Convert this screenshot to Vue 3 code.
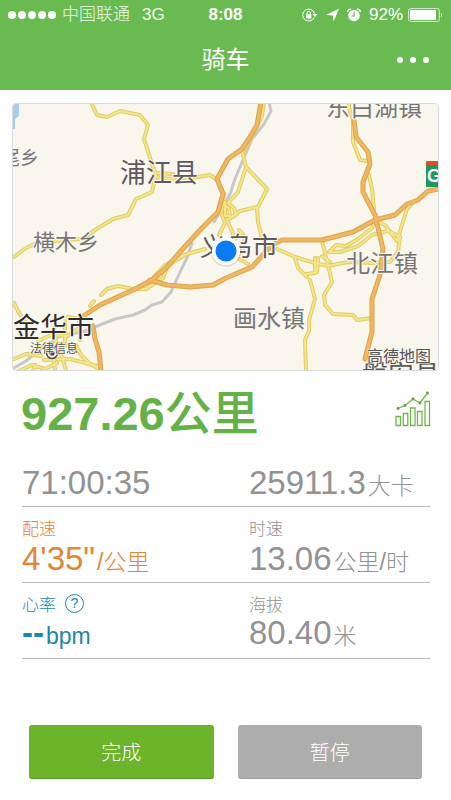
<script setup>
const railways = [
  'M269 102 L271 111 L264 124 L252 139 L243 160 L235 179 L230 194 L224 206 L214 222',
  'M192 243 L187 258 L180 272 L171 292 L162 302 L152 305 L145 310 L133 315 L115 319 L100 325 L83 332 L60 336 L42 348 L33 355 L26 361 L14 368',
]

const minorRoads = [
  'M91 102 L97 115 L107 117 L120 111 L140 115 L148 125 L144 139 L152 164 L156 174 L152 192 L136 199 L128 215 L113 219 L95 230 L82 239 L63 240 L34 244 L26 248 L14 257',
  'M156 173 L173 174 L177 178 L198 177 L210 175 L216 179',
  'M156 177 L171 179 L177 178',
  'M101 295 L107 289 L118 286 L133 289 L146 289 L163 278 L167 268 L173 262 L187 254 L205 249',
  'M152 279 L165 265 L184 255',
  'M264 102 L262 116 L254 132 L246 147 L242 151 L246 167 L267 189 L257 209 L258 222 L262 238',
  'M246 167 L238 192 L228 203 L234 208 L236 215 L227 220',
  'M257 207 L240 211 L227 220 L231 229 L235 239',
  'M217 179 L224 194 L221 213 L225 223 L219 235',
  'M225 202 L225 216 L230 216 L229 208 L224 205',
  'M239 230 L245 237 L243 249 L236 257 L248 264',
  'M349 102 L349 108 L353 119 L353 142 L360 160 L367 161',
  'M369 175 L372 189 L374 209',
  'M375 220 L372 228 L358 239 L346 246 L336 245 L329 252 L340 252 L358 246 L372 235 L387 231',
  'M412 204 L407 209 L402 225 L397 241 L385 225 L375 220',
  'M387 230 L400 237 L398 252 L390 262 L372 263 L348 262 L328 266',
  'M277 249 L295 257 L315 263 L328 266',
  'M322 241 L328 265 L332 282 L324 295 L325 305 L333 314 L353 315 L357 320 L372 318',
  'M322 256 L330 262 M315 258 L315 273 L306 274 M318 258 L317 272',
  'M295 258 L298 268 L307 277',
  'M310 280 L315 299 L309 320 L309 331 L305 340 L306 371',
  'M14 303 L19 313 L26 323 M14 359 L26 354 L41 356',
  'M38 341 L51 335 L68 336 L79 328 L79 319 L68 317',
  'M54 328 L56 340 L53 353 L55 370 M65 321 L65 340 L61 354 L66 370',
  'M40 347 L58 344 L76 347 M44 360 L70 359 L101 367',
  'M19 371 L32 365 L45 369 L57 363 M33 371 L35 365',
  'M76 345 L81 355 L90 364 L101 370 M80 318 L80 340 M94 301 L90 306',
]

const mainRoads = [
  'M261 102 L257 125 L250 137 L242 149 L228 159 L217 179 L223 194 L218 212 L200 230 L180 252 L165 269 L152 280 L133 290 L100 305 L82 317',
  'M150 280 L167 285 L190 287 L213 285 L226 278 L252 267 L263 255 L272 245 L282 240 L322 240 L353 232 L375 220 L395 215 L407 204 L418 200 L428 191 L439 189',
  'M354 120 L356 137 L368 152 L370 164 L363 182 L363 192 L375 215 L379 232 L383 249 L380 275 L372 299 L372 332 L365 359',
  'M93 326 L95 339 L99 352 L101 371',
]

const places = [
  { name: '尾乡', x: 1, y: 165, size: 19, tone: 'town' },
  { name: '浦江县', x: 120, y: 182, size: 26, tone: 'county' },
  { name: '东白湖镇', x: 326, y: 116, size: 24, tone: 'town' },
  { name: '横木乡', x: 33, y: 250, size: 22, tone: 'town' },
  { name: '义乌市', x: 200, y: 256, size: 26, tone: 'county' },
  { name: '北江镇', x: 346, y: 272, size: 24, tone: 'town' },
  { name: '画水镇', x: 233, y: 327, size: 24, tone: 'town' },
  { name: '金华市', x: 13, y: 337, size: 27, tone: 'city' },
  { name: '磐安县', x: 362, y: 384, size: 26, tone: 'county' },
]

const stats = [
  { value: '71:00:35', unit: '' },
  { value: '25911.3', unit: '大卡' },
  { label: '配速', value: '4\'35"', unit: '/公里', tone: 'pace' },
  { label: '时速', value: '13.06', unit: '公里/时' },
  { label: '心率', value: '--', unit: 'bpm', tone: 'heart', help: true },
  { label: '海拔', value: '80.40', unit: '米' },
]
</script>

<template>
  <main class="screen">
    <header class="top">
      <div class="status">
        <div class="carrier">
          <span class="signal"><i v-for="n in 5" :key="n"></i></span>
          <span>中国联通</span>
          <span class="network">3G</span>
        </div>
        <time class="clock">8:08</time>
        <div class="indicators">
          <svg class="lock" viewBox="0 0 17 14" fill="none" stroke="#fff">
            <path d="M13.2 9.5 A6 6 0 1 1 13.5 5.5" />
            <path d="M11.5 6 h5 l-2.5 3z" fill="#fff" stroke="none" />
            <path d="M6 6.5 V5 a1.7 1.7 0 0 1 3.4 0 V6.5" />
            <rect x="5" y="6.3" width="5.4" height="4.2" fill="#fff" stroke="none" />
          </svg>
          <svg class="arrow" viewBox="0 0 13 14"><path d="M13 .8 L7.6 13.4 L6.8 7.4 L.3 6.8z" fill="#fff" /></svg>
          <svg class="alarm" viewBox="0 0 14 14">
            <circle cx="7" cy="7.5" r="5.8" fill="#fff" />
            <path d="M.9 4.2 A2.5 2.5 0 0 1 4 1.2 M10 1.2 A2.5 2.5 0 0 1 13.1 4.2" fill="none" stroke="#fff" stroke-width="1.4" />
            <path d="M7.2 4 V8 H4.5" fill="none" stroke="#6aba52" stroke-width="1.2" />
          </svg>
          <span>92%</span>
          <svg class="battery" viewBox="0 0 35 14">
            <rect x=".6" y=".6" width="30.8" height="12.8" rx="2" fill="none" stroke="#d4edca" />
            <rect x="2" y="2" width="26" height="10" rx="1" fill="#fff" />
            <path d="M33 4.5 Q35 7 33 9.5z" fill="#fff" />
          </svg>
        </div>
      </div>
      <div class="nav">
        <h1>骑车</h1>
        <button class="more" type="button" aria-label="更多"><i></i><i></i><i></i></button>
      </div>
    </header>

    <svg class="map" viewBox="13 104 425 266" role="img" aria-label="地图">
      <rect x="13" y="104" width="425" height="266" fill="#f9f6ee" />
      <path d="M13 104 H19 V116 L15 119 V129 H13z" fill="#a9cbee" />
      <g fill="none" stroke-linejoin="round" stroke-linecap="round">
        <path v-for="d in railways" :key="d" :d="d" stroke="#c9c8c8" stroke-width="3" />
        <path v-for="d in minorRoads" :key="d" :d="d" stroke="#e1cc63" stroke-width="4" />
        <path v-for="d in minorRoads" :key="d + 'in'" :d="d" stroke="#f4e58a" stroke-width="2" />
        <path v-for="d in mainRoads" :key="d" :d="d" stroke="#dca54c" stroke-width="5" />
        <path v-for="d in mainRoads" :key="d + 'in'" :d="d" stroke="#efb761" stroke-width="3" />
      </g>
      <rect x="426" y="161" width="12" height="4" fill="#dc5030" />
      <rect x="426" y="165" width="12" height="22" fill="#209661" />
      <text class="shield" x="427" y="182">G</text>
      <text
        v-for="p in places" :key="p.name" :class="['place', p.tone]"
        :x="p.x" :y="p.y" :font-size="p.size"
      >{{ p.name }}</text>
      <circle cx="52" cy="353" r="5.5" fill="#f9f6ee" stroke="#555" stroke-width="1.6" />
      <circle cx="52" cy="353" r="2.6" fill="#444" />
      <text class="place legal" x="30" y="353" font-size="12">法律信息</text>
      <text class="place brand" x="367" y="362" font-size="16">高德地图</text>
      <circle cx="226" cy="252" r="15" fill="#000" opacity=".1" />
      <circle cx="226" cy="251" r="14" fill="#fff" />
      <circle cx="226" cy="251" r="10.5" fill="#0b7cf4" />
    </svg>

    <section class="summary">
      <p class="distance">927.26<span>公里</span></p>
      <button class="chart" type="button" aria-label="图表">
        <svg viewBox="0 0 36 36" fill="none" stroke="#72b54c" stroke-width="1.3">
          <path d="M1 25.5h4.5v9H1z M8.3 22.5h4.5v12H8.3z M15.5 17H20v17.5h-4.5z M22.5 20.5H27v14h-4.5z M30 10.5h4.5v24H30z" />
          <path d="M3 17.5 L10 14.5 L18 8 L25 12 L32.5 2" />
          <g fill="#609e40" stroke="none">
            <circle cx="3" cy="17.5" r="1.4" /><circle cx="10" cy="14.5" r="1.4" />
            <circle cx="18" cy="8" r="1.4" /><circle cx="25" cy="12" r="1.4" /><circle cx="32.5" cy="2" r="1.4" />
          </g>
        </svg>
      </button>
    </section>

    <dl class="stats">
      <div v-for="s in stats" :key="s.value" :class="['stat', s.tone]">
        <dt v-if="s.label">{{ s.label }}<button v-if="s.help" class="help" type="button" aria-label="帮助">?</button></dt>
        <dd><span class="value">{{ s.value }}</span><span v-if="s.unit" class="unit">{{ s.unit }}</span></dd>
      </div>
    </dl>

    <footer class="actions">
      <button class="done" type="button">完成</button>
      <button class="pause" type="button">暂停</button>
    </footer>
  </main>
</template>

<style>
body {
  margin: 0;
  background: #fefefe;
}
</style>

<style scoped>
* {
  box-sizing: border-box;
}
button {
  padding: 0;
  border: 0;
  background: none;
  font: inherit;
  color: inherit;
}
.screen {
  display: flex;
  flex-direction: column;
  min-height: 100vh;
  font-family: "Liberation Sans", "Noto Sans CJK SC", sans-serif;
  font-weight: 300;
  color: #929292;
}
.top {
  background: #6aba52;
  color: #fff;
}
.status {
  display: grid;
  grid-template-columns: 1fr auto 1fr;
  align-items: center;
  height: 30px;
  padding: 0 8px;
  font-size: 17px;
  line-height: 20px;
}
.carrier,
.indicators {
  display: flex;
  align-items: center;
  gap: 6px;
  white-space: nowrap;
}
.carrier {
  color: #f0faeb;
}
.network {
  margin-left: 6px;
}
.signal {
  display: flex;
  gap: 2px;
}
.signal i {
  width: 8px;
  height: 8px;
  border-radius: 50%;
  background: #fff;
}
.clock {
  font-weight: 700;
}
.indicators {
  justify-content: flex-end;
  gap: 8px;
}
.indicators svg {
  flex: none;
  height: 14px;
}
.lock {
  width: 17px;
}
.arrow {
  width: 13px;
}
.alarm {
  width: 14px;
}
.indicators .battery {
  width: 35px;
  margin-left: -3px;
}
.nav {
  display: grid;
  grid-template-columns: 1fr auto 1fr;
  align-items: center;
  height: 60px;
  padding: 0 22px;
}
h1 {
  grid-column: 2;
  margin: 0;
  font-size: 24px;
  font-weight: 400;
  line-height: 60px;
}
.more {
  display: flex;
  justify-self: end;
  gap: 7px;
}
.more i {
  width: 6px;
  height: 6px;
  border-radius: 50%;
  background: #fff;
}
.map {
  display: block;
  width: calc(100% - 24px);
  margin: 13px 12px 0;
  border: 1px solid #d9dadb;
  border-radius: 4px;
}
.place {
  font-family: "Noto Sans CJK SC", sans-serif;
  font-weight: 400;
  paint-order: stroke;
  stroke: #f9f6ee;
  stroke-width: 2px;
}
.town {
  fill: #777;
}
.county {
  fill: #5c5a5c;
}
.city {
  fill: #2e2c30;
}
.legal,
.brand {
  fill: #555;
  stroke-width: 1px;
}
.shield {
  font: 700 18px "Liberation Sans", sans-serif;
  fill: #fff;
}
.summary {
  display: flex;
  align-items: flex-start;
  justify-content: space-between;
  height: 88px;
  padding: 0 20px 0 21px;
}
.distance {
  margin: 0;
  font-size: 47px;
  font-weight: 700;
  line-height: 78px;
  color: #64b147;
}
.distance span {
  font-family: "Noto Sans CJK SC", sans-serif;
  font-weight: 500;
}
.chart {
  width: 36px;
  height: 36px;
  margin-top: 20px;
}
.chart svg {
  display: block;
}
.stats {
  display: grid;
  grid-template-columns: 227fr 181fr;
  grid-template-rows: 48px 76px 76px;
  margin: 0 21px 0 22px;
}
.stat {
  display: flex;
  flex-direction: column;
  justify-content: flex-end;
  border-bottom: 1px solid #bbb;
  white-space: nowrap;
}
dt {
  display: flex;
  align-items: center;
  gap: 9px;
  height: 24px;
  font-size: 17px;
}
dd {
  height: 43px;
  margin: 0;
  font-size: 33px;
  line-height: 40px;
}
.stat:nth-child(n + 5) dd {
  line-height: 36px;
}
.unit {
  margin-left: 2px;
  font-size: 23px;
}
.pace {
  color: #e28535;
}
.heart {
  color: #1c87a8;
}
.heart .value {
  font-weight: 700;
}
.help {
  width: 19px;
  height: 19px;
  border: 1px solid currentColor;
  border-radius: 50%;
  font-size: 14px;
  line-height: 17px;
}
.actions {
  display: grid;
  grid-template-columns: 1fr 1fr;
  gap: 24px;
  margin-top: auto;
  padding: 20px 29px 21px;
}
.actions button {
  height: 54px;
  border-radius: 3px;
  font-size: 20px;
  color: #fff;
}
.actions .done {
  background: #6cb52b;
  border-bottom: 1px solid #57942b;
}
.actions .pause {
  background: #adadad;
  border-bottom: 1px solid #a0a0a0;
}
</style>
